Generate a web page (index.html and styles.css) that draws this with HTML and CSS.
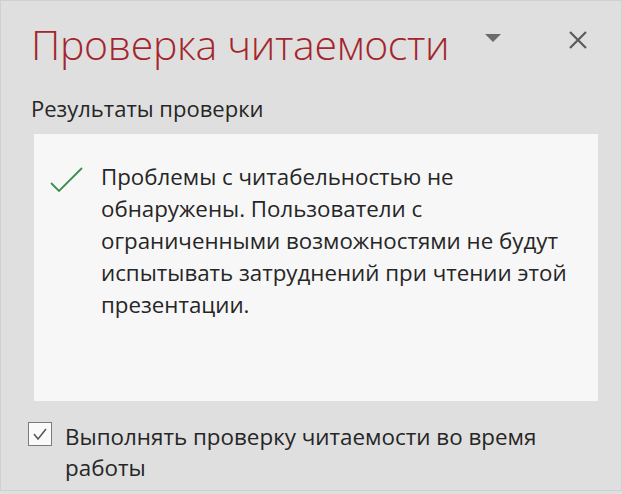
FILE: index.html
```html
<!DOCTYPE html>
<html lang="ru">
<head>
    <meta charset="UTF-8">
    <meta name="viewport" content="width=device-width, initial-scale=1.0">
    <title>Проверка читаемости</title>
    <link rel="stylesheet" href="styles.css">
</head>
<body>
    <div class="pane">
        <div class="pane-header">
            <h1 class="pane-title">Проверка читаемости</h1>
            <!-- Pane options menu -->
            <button class="pane-btn menu-btn" title="Параметры области задач">
                <svg width="16" height="8" viewBox="0 0 16 8"><path d="M0 0H16L8 8Z" fill="#6b6b6b"/></svg>
            </button>
            <button class="pane-btn close-btn" title="Закрыть">
                <svg width="20" height="20" viewBox="0 0 20 20"><path d="M2 2L18 18M18 2L2 18" stroke="#5a5a5a" stroke-width="2.2" fill="none"/></svg>
            </button>
        </div>

        <h2 class="section-label">Результаты проверки</h2>

        <div class="results">
            <svg class="ok-icon" width="34" height="26" viewBox="0 0 34 26">
                <path d="M2 16L10 24L33 1" stroke="#3b8f4a" stroke-width="1.8" fill="none"/>
            </svg>
            <p class="results-text">Проблемы с читабельностью не обнаружены. Пользователи с ограниченными возможностями не будут испытывать затруднений при чтении этой презентации.</p>
        </div>

        <label class="option">
            <input type="checkbox" class="option-check" checked>
            <span class="option-box">
                <svg width="16" height="14" viewBox="0 0 16 14"><path d="M2 7L6 12L14 2" stroke="#555" stroke-width="1.5" fill="none"/></svg>
            </span>
            <span class="option-text">Выполнять проверку читаемости во время работы</span>
        </label>
    </div>
</body>
</html>
```

FILE: styles.css
```css
body {
    margin: 0;
    background-color: #dfdfdf;
    font-family: 'Open Sans', 'Noto Sans', sans-serif;
    color: #262626;
}
.pane {
    box-sizing: border-box;
    width: 622px;
    height: 491px;
    border: 1px solid #d0d0d0;
    padding: 0 0 0 24px;
}
.pane-header {
    display: flex;
    align-items: center;
    height: 82px;
}
.pane-title {
    margin: 0 0 0 6px;
    font-size: 41px;
    font-weight: 300;
    letter-spacing: -0.3px;
    color: #a4262c;
    flex: 1;
    padding-top: 4px;
}
.pane-btn {
    background: none;
    border: none;
    padding: 0;
    display: flex;
    cursor: pointer;
}
.menu-btn {
    margin-right: 67px;
    margin-top: -8px;
}
.close-btn {
    margin-right: 33px;
    margin-top: -5px;
}
.section-label {
    margin: 11px 0 0 6px;
    font-size: 22px;
    font-weight: 400;
    line-height: 28px;
}
.results {
    display: flex;
    align-items: flex-start;
    width: 564px;
    height: 267px;
    box-sizing: border-box;
    margin: 12px 0 0 9px;
    padding: 33px 20px 0 15px;
    background-color: #f7f7f7;
}
.ok-icon {
    flex: none;
    margin-right: 18px;
}
.results-text {
    margin: -6px 0 0 0;
    font-size: 22.3px;
    line-height: 32px;
}
.option {
    display: flex;
    align-items: flex-start;
    margin: 20px 0 0 3px;
    cursor: pointer;
}
.option-check {
    display: none;
}
.option-box {
    flex: none;
    display: flex;
    align-items: center;
    justify-content: center;
    width: 22px;
    height: 22px;
    border: 1px solid #7a7a7a;
    background-color: #fafafa;
    margin-top: 1px;
    margin-right: 13px;
}
.option-text {
    font-size: 22.4px;
    line-height: 31px;
    width: 500px;
}
```
